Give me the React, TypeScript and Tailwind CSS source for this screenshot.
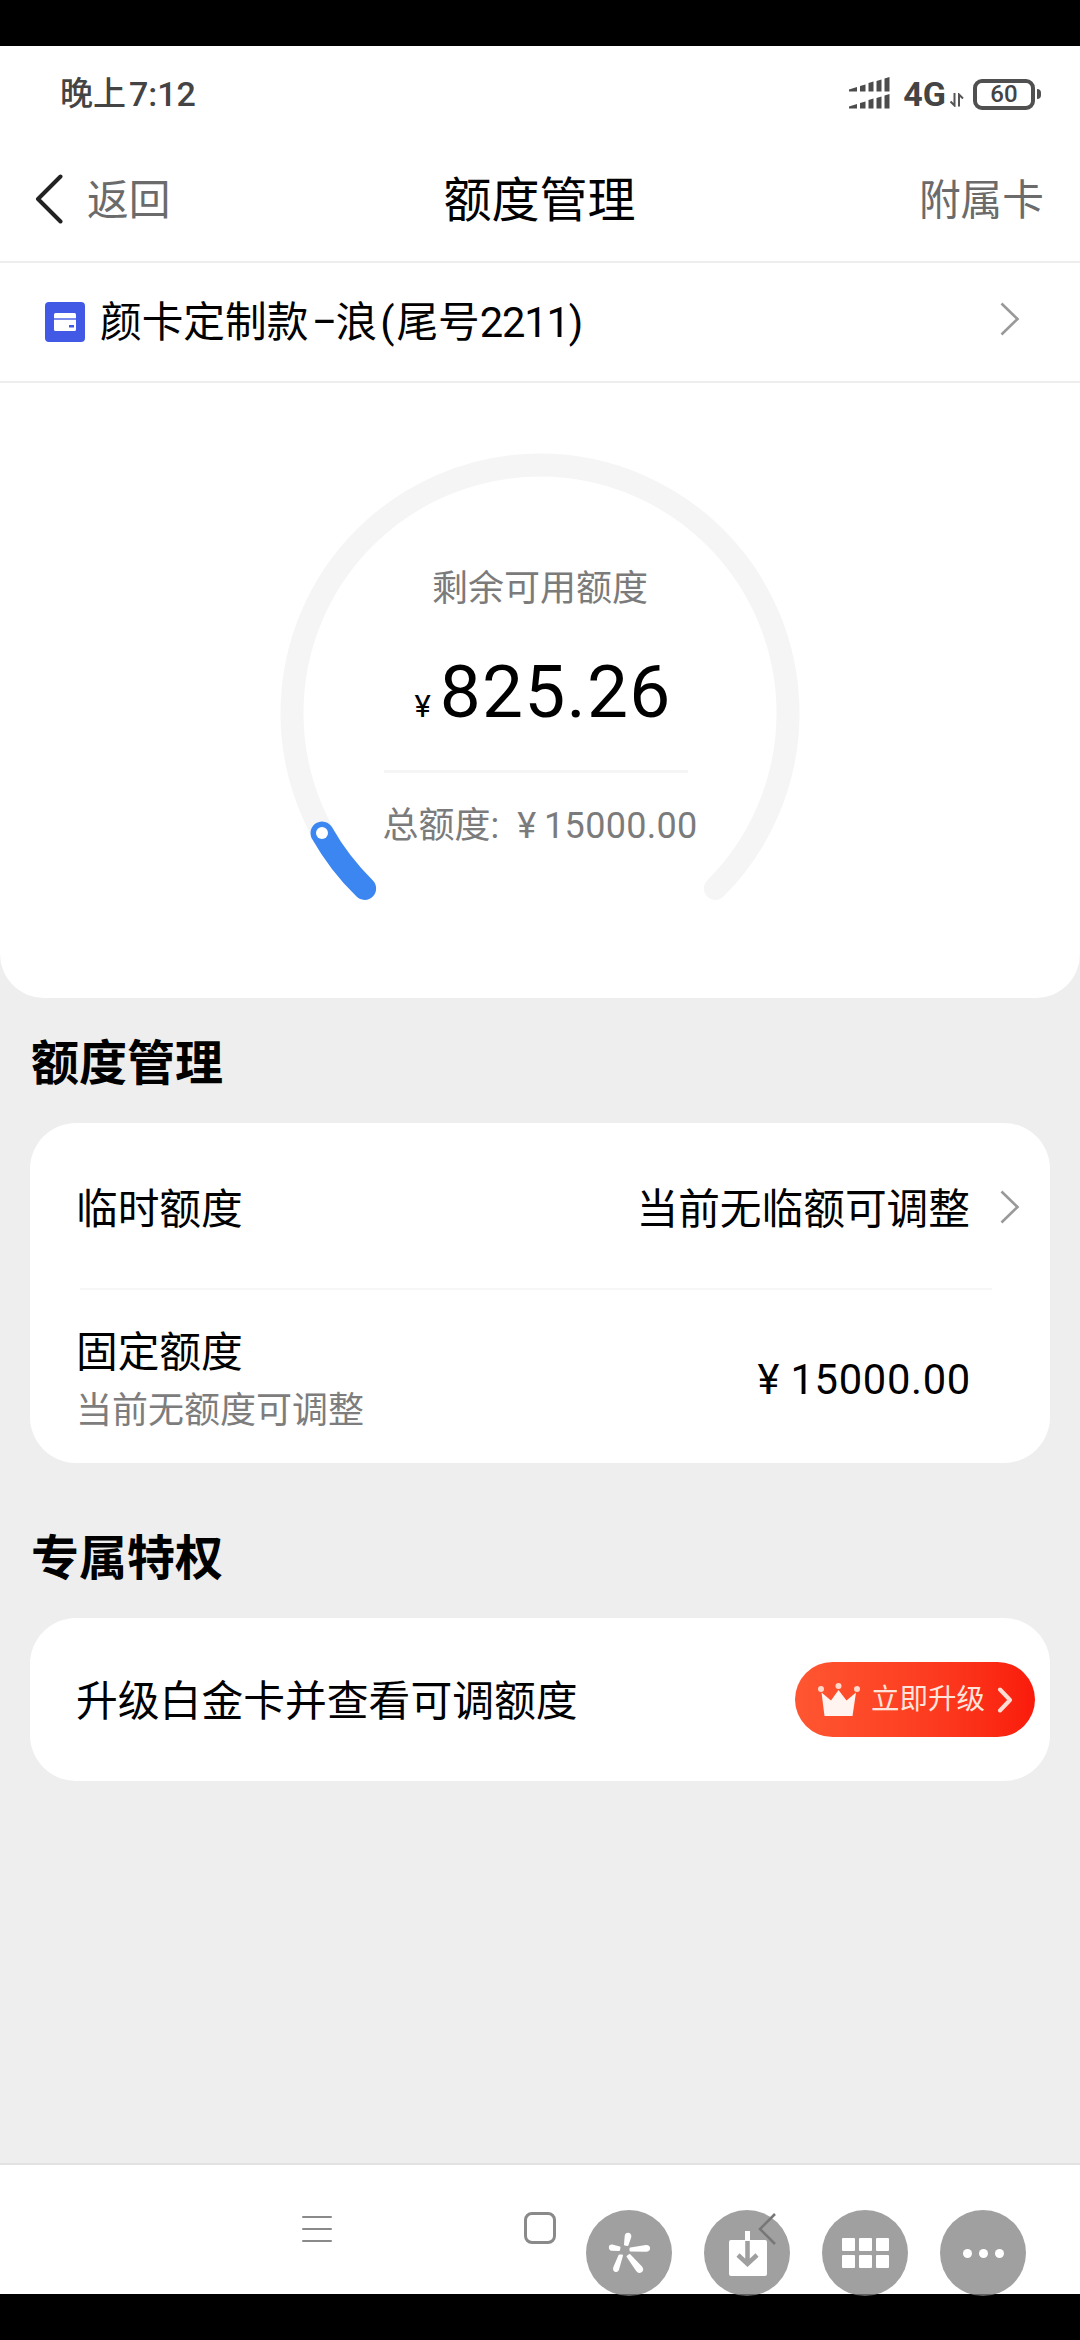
import React from "react";

function Chevron({ className = "" }: { className?: string }) {
  return (
    <svg width="20" height="34" viewBox="0 0 20 34" fill="none" className={className}>
      <path d="M1.5 1.5 17.5 17 1.5 32.5" stroke="#999" strokeWidth="2.6" />
    </svg>
  );
}

function StatusBar() {
  return (
    <div className="flex h-[96px] items-center justify-between pr-[39px] pl-[60px] text-[#444]">
      <div className="flex items-center text-[33px] leading-[40px] font-medium">
        <span>晚上</span>
        <span className="ml-[3px] text-[34px]">7:12</span>
      </div>
      <div className="flex items-center">
        <svg width="42" height="34" viewBox="0 0 42 34" fill="#4c4c4c">
          <path d="M0 12.5 8 10V14.5H0ZM11 9 16.500 7.500V14.500H11ZM19.500 6 24.500 4.500V14.500H19.500ZM27.500 4 32.500 2.500V14.500H27.500ZM35.500 1.500 40.500 0V14.500H35.500Z" />
          <path d="M0 29.500 8 27V31.500H0ZM11 26 16.500 24.500V31.500H11ZM19.500 23 24.500 21.500V31.500H19.500ZM27.500 21 32.500 19.500V31.500H27.500ZM35.500 18.500 40.500 17V31.500H35.500Z" />
        </svg>
        <span className="ml-[12px] text-[34px] leading-[40px] font-bold">4G</span>
        <svg width="14" height="14" viewBox="0 0 14 14" fill="none" stroke="#555" strokeWidth="2" className="mt-[12px] ml-[4px]">
          <path d="M4.500 0V12.500L0.500 8.500M9 13.500V1.500L13 5.500" />
        </svg>
        <div className="ml-[9px] flex h-[31px] w-[62px] items-center justify-center rounded-[9px] border-4 border-[#505050]">
          <span className="text-[24px] leading-[24px] font-medium">60</span>
        </div>
        <div className="ml-[2px] h-[10px] w-[4px] rounded-r-sm bg-[#505050]" />
      </div>
    </div>
  );
}

function Header() {
  return (
    <div className="grid h-[121px] grid-cols-3 items-center border-b-2 border-[#eeeeee] pr-[36px] pb-[6px] pl-[35px]">
      <div className="flex items-center text-[41.7px] leading-[48px] text-[#6b6b6b]">
        <svg width="28" height="50" viewBox="0 0 28 50" fill="none">
          <path d="M25.500 2.500 3 25 25.500 47.500" stroke="#222" strokeWidth="4" strokeLinecap="round" strokeLinejoin="round" />
        </svg>
        <span className="mt-[5px] ml-[24px]">返回</span>
      </div>
      <div className="mt-[5px] text-center text-[48px] leading-[56px] text-black">额度管理</div>
      <div className="mt-[5px] text-right text-[41.7px] leading-[48px] text-[#6b6b6b]">附属卡</div>
    </div>
  );
}

function CardRow() {
  return (
    <div className="flex h-[120px] items-center border-b-2 border-[#eeeeee] pr-[60px] pl-[45px]">
      <svg width="40" height="40" viewBox="0 0 40 40">
        <rect width="40" height="40" rx="4" fill="#4259e6" />
        <rect x="9" y="11" width="22" height="18" rx="1.500" fill="#fff" />
        <rect x="9" y="16" width="22" height="2" fill="#7d8cec" />
        <rect x="24" y="23" width="5" height="2.500" fill="#4259e6" />
      </svg>
      <div className="mt-[2px] ml-[15px] flex text-[41.7px] leading-[48px] text-black">
        <span>颜卡定制款</span>
        <span className="ml-[3px] w-[24px] scale-x-90 text-center">–</span>
        <span className="whitespace-nowrap">浪</span>
        <span className="mr-[2px] ml-[3px]">(</span>
        <span>尾号</span>
        <span className="tracking-[-1.2px]">2211</span>
        <span>)</span>
      </div>
      <Chevron className="-mt-[7px] ml-auto" />
    </div>
  );
}

function Gauge() {
  return (
    <div className="grid h-[615px] justify-items-center rounded-b-[44px] bg-white">
      <svg width="540" height="500" viewBox="270 433 540 500" fill="none" strokeLinecap="round" className="col-start-1 row-start-1 mt-[50px]">
        <path d="M364.600 888.400A248 248 0 1 1 715.400 888.400" stroke="#f5f5f5" strokeWidth="23" />
        <path d="M364.600 888.400A248 248 0 0 1 322 833" stroke="#3b86f0" strokeWidth="23" />
        <circle cx="322" cy="833" r="6" fill="#fff" />
      </svg>
      <div className="z-10 col-start-1 row-start-1 flex flex-col items-center">
        <div className="mt-[186px] text-[36px] leading-[40px] text-[#7b7b7b]">剩余可用额度</div>
        <div className="mt-[43px] ml-[6px] flex items-baseline text-black">
          <span className="mr-[9px] text-[31px] leading-[80px]">¥</span>
          <span className="text-[73px] leading-[80px] tracking-[1.2px]">825.26</span>
        </div>
        <div className="mt-[23px] mr-[8px] h-[3px] w-[304px] bg-[#f5f5f5]" />
        <div className="mt-[33px] flex text-[36px] leading-[40px] text-[#7b7b7b]">
          <span>总额度:</span>
          <span className="ml-[18px]">¥</span>
          <span className="ml-[8px] tracking-[0.3px]">15000.00</span>
        </div>
      </div>
    </div>
  );
}

function LimitCard() {
  return (
    <div className="mx-[30px] mt-[34px] h-[340px] rounded-[46px] bg-white pr-[30px] pl-[46px] text-[41.7px] leading-[48px] text-black">
      <div className="flex h-[165px] items-center pt-[8px]">
        <span>临时额度</span>
        <span className="ml-auto">当前无临额可调整</span>
        <Chevron className="-mt-[5px] ml-[30px]" />
      </div>
      <div className="mr-[28px] ml-[4px] h-[2px] bg-[#f6f6f6]" />
      <div className="flex items-center justify-between pt-[39px] pr-[49px]">
        <div>
          <div>固定额度</div>
          <div className="mt-[14px] text-[36px] leading-[40px] text-[#7d7d7d]">当前无额度可调整</div>
        </div>
        <div className="flex">
          <span>¥</span>
          <span className="ml-[11px] tracking-[0.7px]">15000.00</span>
        </div>
      </div>
    </div>
  );
}

function UpgradeCard() {
  return (
    <div className="mx-[30px] mt-[34px] flex h-[163px] items-center justify-between rounded-[46px] bg-white pr-[15px] pl-[46px]">
      <span className="mt-[5px] text-[41.8px] leading-[48px] text-black">升级白金卡并查看可调额度</span>
      <button className="flex h-[75px] w-[240px] items-center rounded-full bg-linear-to-r from-[#ff5631] to-[#fa1a0b] pl-[23px]">
        <svg width="42" height="34" viewBox="0 0 42 34" fill="#fff4f0">
          <path d="M3.500 9.500 13 17.500 20.500 7 28.500 17.500 38 9.500 34.500 33H6.500Z" />
          <circle cx="3" cy="6" r="3" fill="#ffd8cb" />
          <circle cx="20.500" cy="3" r="3" fill="#ffd8cb" />
          <circle cx="39" cy="6" r="3" fill="#ffd8cb" />
        </svg>
        <span className="ml-[11px] text-[28.5px] leading-[34px] text-[#ffe4dc]">立即升级</span>
        <svg width="16" height="26" viewBox="0 0 16 26" fill="none" className="ml-[12px]">
          <path d="M3 2.500 13 13 3 23.500" stroke="#ffdcd4" strokeWidth="4" strokeLinecap="round" strokeLinejoin="round" />
        </svg>
      </button>
    </div>
  );
}

function RoundButton({ children }: { children: React.ReactNode }) {
  return <div className="flex size-[86px] items-center justify-center rounded-full bg-[#808080]/75">{children}</div>;
}

function NavBar() {
  return (
    <div className="relative h-[131px] border-t-2 border-[#e2e2e2] bg-white">
      <div className="flex pt-[47px] pl-[302px]">
        <div className="flex h-[34px] w-[30px] flex-col justify-center gap-[9.500px]">
          <div className="h-[2.500px] rounded-full bg-[#8a8a8a]" />
          <div className="h-[2.500px] rounded-full bg-[#8a8a8a]" />
          <div className="h-[2.500px] rounded-full bg-[#8a8a8a]" />
        </div>
        <div className="ml-[192px] size-[32px] rounded-[8px] border-3 border-[#8a8a8a]" />
      </div>
      <div className="absolute top-[45px] left-[586px] flex gap-[32px]">
        <RoundButton>
          <svg width="86" height="86" viewBox="0 0 86 86" fill="#fff" stroke="#fff" strokeLinejoin="round" strokeWidth="2">
            <path d="M39 34.500 39.700 26C40.300 22.500 45 23 44.300 27L41.500 35Z" />
            <path d="M33 40 25.500 39.800C23 39 23.500 35 26 35.500L33.500 37.500Z" />
            <path d="M44.500 38.500 60 36C64 35.700 64 40.500 60.500 40.800L44.500 40.500Z" />
            <path d="M36 45.500 32 59.500C30.500 62.500 27.300 61 28.300 57.500L33.500 45.500Z" />
            <path d="M43.500 45 55.500 57.500C57.500 60.500 53.500 64 51 60.500L41.500 46.500Z" />
          </svg>
        </RoundButton>
        <RoundButton>
          <svg width="86" height="86" viewBox="0 0 86 86" fill="none">
            <rect x="25" y="30" width="38" height="36" rx="2" fill="#fff" />
            <rect x="41" y="21" width="5" height="10" fill="#fff" />
            <path d="M43.500 31V53M34 45 43.500 54 53 45" stroke="#9f9f9f" strokeWidth="4.500" />
            <path d="M71 4 56 19 71 34" stroke="#777" strokeWidth="2.600" />
          </svg>
        </RoundButton>
        <RoundButton>
          <div className="grid grid-cols-3 gap-[4px]">
            {[0, 1, 2, 3, 4, 5].map((i) => (
              <div key={i} className="size-[13px] rounded-[1px] bg-white" />
            ))}
          </div>
        </RoundButton>
        <RoundButton>
          <div className="flex gap-[7px]">
            {[0, 1, 2].map((i) => (
              <div key={i} className="size-[9px] rounded-full bg-white" />
            ))}
          </div>
        </RoundButton>
      </div>
    </div>
  );
}

export default function App() {
  return (
    <div className="flex h-[2340px] w-[1080px] flex-col overflow-hidden bg-black py-[46px] font-[Roboto,'Noto_Sans_CJK_SC',sans-serif]">
      <div className="flex flex-1 flex-col bg-[#eeeeee]">
        <div className="bg-white">
          <StatusBar />
          <Header />
          <CardRow />
        </div>
        <Gauge />
        <h2 className="mt-[41px] ml-[31px] text-[48px] leading-[50px] font-bold text-black">额度管理</h2>
        <LimitCard />
        <h2 className="mt-[71px] ml-[31px] text-[48px] leading-[50px] font-bold text-black">专属特权</h2>
        <UpgradeCard />
        <div className="mt-auto">
          <NavBar />
        </div>
      </div>
    </div>
  );
}
